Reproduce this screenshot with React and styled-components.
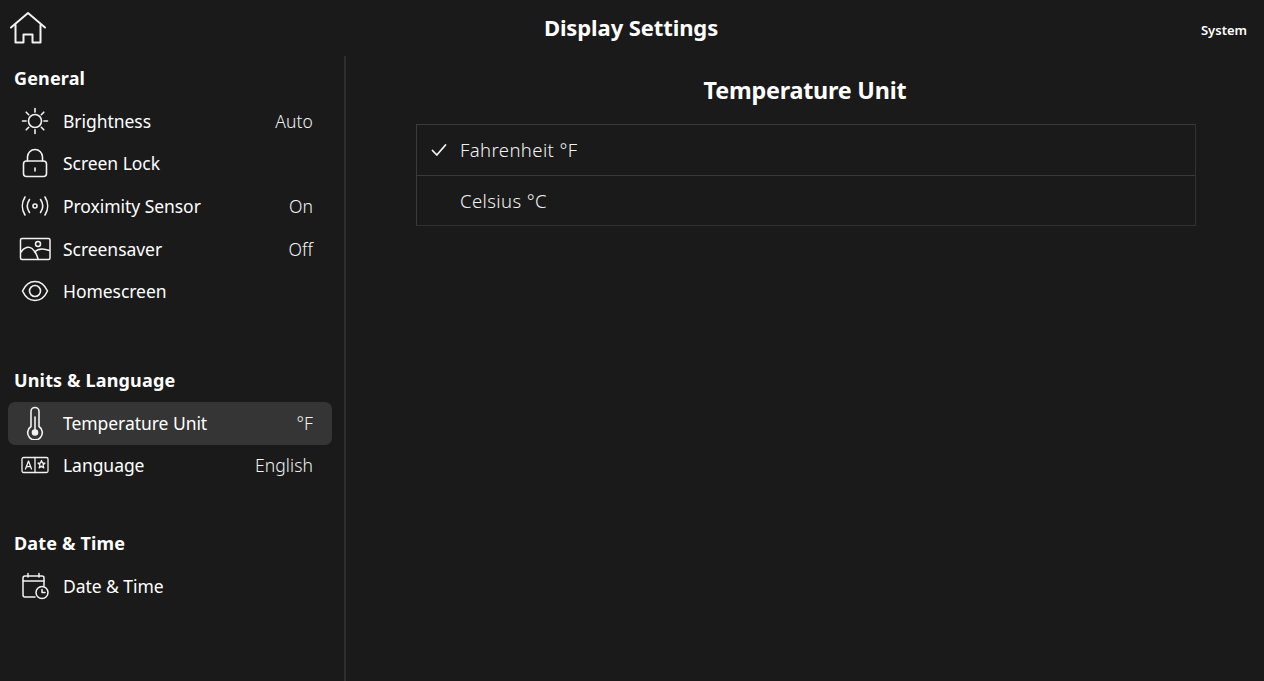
import React from "react"
import styled, { createGlobalStyle } from "styled-components"

const GlobalStyle = createGlobalStyle`
  html, body {
    margin: 0;
    height: 100%;
    background: #1a1a1a;
    color: #fff;
    font-family: "Noto Sans", "Open Sans", sans-serif;
  }
`

const Page = styled.div`
  height: 681px;
  overflow: hidden;
  display: flex;
  flex-direction: column;
`

const Header = styled.header`
  height: 56px;
  flex: none;
  display: grid;
  grid-template-columns: 1fr auto 1fr;
  align-items: center;
  padding: 0 17px 0 10px;
`

const HomeButton = styled.div`
  display: flex;
  height: 36px;
  align-items: center;
`

const PageTitle = styled.h1`
  margin: 0 0 3px 5px;
  font-size: 22px;
  font-weight: 700;
  letter-spacing: -0.1px;
`

const Context = styled.div`
  justify-self: end;
  font-size: 13px;
  font-weight: 600;
  margin-top: 3px;
`

const Body = styled.div`
  flex: 1;
  display: flex;
  min-height: 0;
`

const Sidebar = styled.aside`
  flex: none;
  border-right: 2px solid #2e2e2e;
  padding: 1px 12px 0 8px;
  width: 324px;
`

const Group = styled.section`
  margin-bottom: ${(p) => p.$gap}px;
`

const GroupTitle = styled.h2`
  margin: 0;
  height: 43px;
  padding-left: 6px;
  padding-bottom: ${(p) => p.$lift}px;
  box-sizing: border-box;
  display: flex;
  align-items: center;
  font-size: 18px;
  font-weight: 700;
  letter-spacing: 0.15px;
`

const Row = styled.div`
  height: 42.7px;
  box-sizing: border-box;
  display: flex;
  align-items: center;
  border-radius: 7px;
  background: ${(p) => (p.$active ? "#353535" : "transparent")};
  padding: 0 19px 1.5px 9px;
  font-size: 17.5px;
  letter-spacing: -0.05px;
`

const IconSlot = styled.span`
  width: 36px;
  height: 36px;
  margin-right: 10px;
  flex: none;
  display: flex;
  align-items: center;
  justify-content: center;
`

const RowLabel = styled.span`
  flex: 1;
`

const RowValue = styled.span`
  font-weight: 300;
  color: #f2f2f2;
  letter-spacing: 0.1px;
`

const Main = styled.main`
  flex: 1;
  display: flex;
  flex-direction: column;
  align-items: center;
`

const SectionTitle = styled.h2`
  margin: 0;
  height: 68px;
  padding-bottom: 1px;
  box-sizing: border-box;
  display: flex;
  align-items: center;
  font-size: 23.3px;
  font-weight: 700;
  letter-spacing: -0.2px;
`

const OptionList = styled.div`
  width: 780px;
  margin-left: 2px;
  box-sizing: border-box;
  border: 1px solid #3a3a3a;
  border-right-color: #303030;
  border-bottom-color: #303030;
`

const Option = styled.div`
  height: 50px;
  box-sizing: border-box;
  display: flex;
  align-items: center;
  padding-bottom: 1px;
  font-size: 18.5px;
  font-weight: 300;
  letter-spacing: 0.4px;
  color: #f2f2f2;
  & + & {
    border-top: 1px solid #3a3a3a;
    padding-bottom: 0;
  }
`

const CheckSlot = styled.span`
  width: 43px;
  flex: none;
  display: flex;
  justify-content: center;
`

const Stroke = styled.svg`
  fill: none;
  stroke: #f2f2f2;
  stroke-width: ${(p) => p.$weight || 1.8};
  stroke-linecap: round;
  stroke-linejoin: round;
  display: block;
`

const HomeIcon = () => (
  <Stroke width="36" height="36" viewBox="0 0 36 36" $weight={2}>
    <path d="M1 17.5 18 3l17 14.5" />
    <path d="M5.5 15v17.5h8V24.5h9v8h8V15" />
  </Stroke>
)

const SunIcon = () => (
  <Stroke width="28" height="28" viewBox="0 0 28 28" $weight={1.6}>
    <circle cx="14" cy="14" r="6.5" />
    <path d="M14 1.500v3.600M14 22.900v3.600M1.500 14h3.600M22.900 14h3.600M5.200 5.200l2.500 2.500M20.300 20.300l2.500 2.500M22.800 5.200l-2.500 2.500M7.700 20.300l-2.500 2.500" />
  </Stroke>
)

const LockIcon = () => (
  <Stroke width="28" height="30" viewBox="0 0 28 30" $weight={1.6}>
    <rect x="2.500" y="13" width="23" height="15.500" rx="3" />
    <path d="M6.500 13V9a7.500 7.500 0 0 1 15 0v4" />
    <path d="M14 20v3" />
  </Stroke>
)

const ProximityIcon = () => (
  <Stroke width="30" height="22" viewBox="0 0 30 22" $weight={1.6}>
    <circle cx="15" cy="11" r="2" />
    <path d="M9.500 4.500C6.700 8.500 6.700 13.500 9.500 17.500M20.500 4.500c2.800 4 2.800 9 0 13" />
    <path d="M5 2C1.500 7.500 1.500 14.500 5 20M25 2c3.500 5.500 3.500 12.500 0 18" />
  </Stroke>
)

const ScreensaverIcon = () => (
  <Stroke width="32" height="24" viewBox="0 0 32 24" $weight={1.5}>
    <rect x="1.500" y="1.500" width="29.500" height="21" rx="1.500" />
    <circle cx="19" cy="7" r="2.500" />
    <path d="M2 15c3-5 8-6 11-3.500 3 2.500 5 6 6 10.500" />
    <path d="M15.500 15c3-3 7.500-4.500 15-1.500" />
  </Stroke>
)

const EyeIcon = () => (
  <Stroke width="28" height="24" viewBox="0 0 28 24" $weight={1.6}>
    <path d="M1.500 12C4.500 5.500 9 2.500 14 2.500s9.500 3 12.500 9.500C23.500 18.500 19 21.500 14 21.500S4.500 18.500 1.500 12Z" />
    <circle cx="14" cy="12" r="5.500" />
  </Stroke>
)

const ThermometerIcon = () => (
  <Stroke width="20" height="34" viewBox="0 0 20 34" $weight={1.6}>
    <path d="M6 20.500V5.500a4 4 0 0 1 8 0v15a7.300 7.300 0 1 1-8 0Z" />
    <path d="M10 11v15" />
    <circle cx="10" cy="26.500" r="2.500" fill="#f2f2f2" />
  </Stroke>
)

const LanguageIcon = () => (
  <Stroke width="28" height="18" viewBox="0 0 28 18" $weight={1.3}>
    <rect x="1" y="1.500" width="26" height="15" rx="1.500" />
    <path d="M14 1.500v15" />
    <path d="M4.500 13 7.500 5l3 8M5.500 10.700h4" />
    <path d="M20.500 4.500l1 2.600h2.500l-2 1.800.8 3-2.300-1.700-2.300 1.700.8-3-2-1.800H19.500Z" />
  </Stroke>
)

const CalendarIcon = () => (
  <Stroke width="28" height="28" viewBox="0 0 28 28" $weight={1.5}>
    <path d="M14 25H4a2 2 0 0 1-2-2V6a2 2 0 0 1 2-2h17a2 2 0 0 1 2 2v8" />
    <path d="M2 9h21M7 1.500V5M18 1.500V5" />
    <circle cx="21" cy="20.500" r="6" />
    <path d="M21 17.500v3h3" />
  </Stroke>
)

const CheckIcon = () => (
  <Stroke width="16" height="14" viewBox="0 0 16 14" $weight={1.8}>
    <path d="M1.500 7.500 5.800 12 14.500 2" />
  </Stroke>
)

const groups = [
  {
    title: "General",
    gap: 45.5,
    lift: 2,
    rows: [
      { icon: <SunIcon />, label: "Brightness", value: "Auto" },
      { icon: <LockIcon />, label: "Screen Lock" },
      { icon: <ProximityIcon />, label: "Proximity Sensor", value: "On" },
      { icon: <ScreensaverIcon />, label: "Screensaver", value: "Off" },
      { icon: <EyeIcon />, label: "Homescreen" },
    ],
  },
  {
    title: "Units & Language",
    gap: 34.6,
    lift: 0,
    rows: [
      { icon: <ThermometerIcon />, label: "Temperature Unit", value: "°F", active: true },
      { icon: <LanguageIcon />, label: "Language", value: "English" },
    ],
  },
  {
    title: "Date & Time",
    gap: 0,
    lift: 0,
    rows: [{ icon: <CalendarIcon />, label: "Date & Time" }],
  },
]

export default function App() {
  return (
    <Page>
      <GlobalStyle />
      <Header>
        <HomeButton>
          <HomeIcon />
        </HomeButton>
        <PageTitle>Display Settings</PageTitle>
        <Context>System</Context>
      </Header>
      <Body>
        <Sidebar>
          {groups.map((group) => (
            <Group key={group.title} $gap={group.gap}>
              <GroupTitle $lift={group.lift}>{group.title}</GroupTitle>
              {group.rows.map((row) => (
                <Row key={row.label} $active={row.active}>
                  <IconSlot>{row.icon}</IconSlot>
                  <RowLabel>{row.label}</RowLabel>
                  {row.value && <RowValue>{row.value}</RowValue>}
                </Row>
              ))}
            </Group>
          ))}
        </Sidebar>
        <Main>
          <SectionTitle>Temperature Unit</SectionTitle>
          <OptionList>
            <Option>
              <CheckSlot>
                <CheckIcon />
              </CheckSlot>
              Fahrenheit °F
            </Option>
            <Option>
              <CheckSlot />
              Celsius °C
            </Option>
          </OptionList>
        </Main>
      </Body>
    </Page>
  )
}
